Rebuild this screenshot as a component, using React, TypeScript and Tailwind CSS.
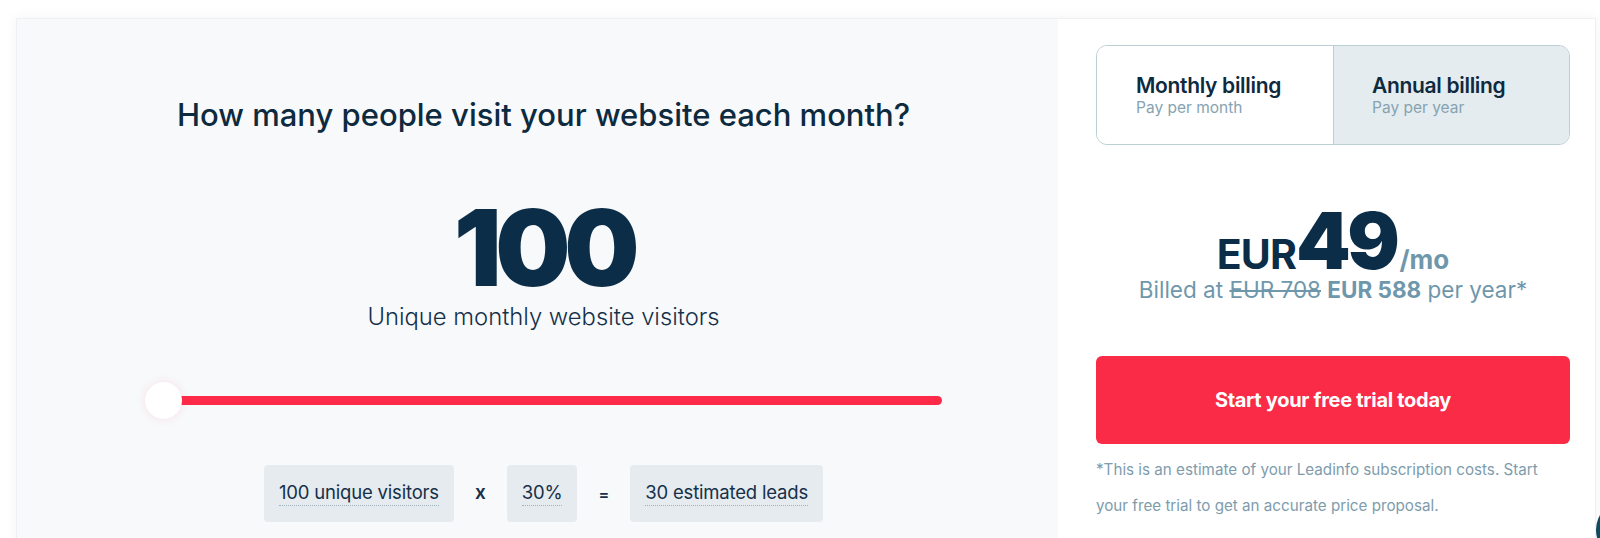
import React from "react";

const FONT = { fontFamily: "Inter, 'Noto Sans', sans-serif" };

function FormulaBox({ children }: { children: React.ReactNode }) {
  return (
    <div className="flex h-[57px] items-center rounded-[4px] bg-[#e5ebee] px-[15px]">
      <span className="border-b border-dotted border-[#9db0bb] pb-[2px] text-[18.5px] leading-[22px] tracking-[-0.01em] text-[#15304a]">
        {children}
      </span>
    </div>
  );
}

function VisitorSlider() {
  return (
    <div className="relative flex h-[38px] w-[797px] items-center">
      <div className="ml-[19px] h-[9px] flex-1 rounded-full bg-[#fd2a48]" />
      <div className="absolute left-0 top-[1px] h-[37px] w-[37px] rounded-full bg-white shadow-[0_0_10px_rgba(253,42,72,0.12)]" />
    </div>
  );
}

function BillingToggle() {
  return (
    <div className="flex h-[100px] overflow-hidden rounded-[11px] border border-[#bccfd5]">
      <button type="button" className="flex flex-1 flex-col items-start justify-center bg-white pl-[39px] text-left">
        <span className="text-[21px] font-semibold leading-[25px] tracking-[-0.015em] text-[#0e2a3f]">
          Monthly billing
        </span>
        <span className="text-[15.5px] leading-[20px] text-[#86a3b1]">Pay per month</span>
      </button>
      <button type="button" className="flex flex-1 flex-col items-start justify-center border-l border-[#bccfd5] bg-[#e4ecf0] pl-[38px] text-left">
        <span className="text-[21px] font-semibold leading-[25px] tracking-[-0.015em] text-[#0e2a3f]">
          Annual billing
        </span>
        <span className="text-[15.5px] leading-[20px] text-[#86a3b1]">Pay per year</span>
      </button>
    </div>
  );
}

export default function App() {
  return (
    <div className="relative h-[538px] overflow-hidden bg-white pl-[16px] pr-[4px] pt-[18px]" style={FONT}>
      <div className="flex h-[560px] border border-[#eef1f3] shadow-[0_0_12px_rgba(15,40,60,0.05)]">
        {/* calculator */}
        <div className="flex w-[1041px] flex-col items-center bg-[#f7f9fb] pl-[12px] pt-[76px]">
          <h2 className="text-[31px] font-medium leading-[40px] tracking-[0em] text-[#0e2a3f]">
            How many people visit your website each month?
          </h2>
          <div className="mt-[73px] text-[106px] font-black leading-[80px] tracking-[-0.06em] text-[#0b2d47]">
            100
          </div>
          <div className="mt-[14px] text-[23.8px] font-light leading-[30px] text-[#15304a]">
            Unique monthly website visitors
          </div>
          <div className="mt-[49px]">
            <VisitorSlider />
          </div>
          <div className="mt-[46px] flex items-center gap-[21px]">
            <FormulaBox>100 unique visitors</FormulaBox>
            <span className="text-[19px] font-semibold text-[#15304a]">x</span>
            <FormulaBox>30%</FormulaBox>
            <span className="text-[16px] font-semibold text-[#15304a]">=</span>
            <FormulaBox>30 estimated leads</FormulaBox>
          </div>
        </div>

        {/* pricing */}
        <div className="flex flex-1 flex-col bg-white pl-[38px] pr-[25px] pt-[26px]">
          <BillingToggle />
          <div className="mt-[68px] flex items-baseline justify-center">
            <span className="text-[41px] font-bold leading-none tracking-[-0.02em] text-[#0b2d47]">EUR</span>
            <span className="text-[78px] font-black leading-[56px] tracking-[-0.045em] text-[#0b2d47]">49</span>
            <span className="ml-[3px] text-[26px] font-bold leading-none text-[#6f97ab]">/mo</span>
          </div>
          <div className="text-center text-[22.5px] leading-[30px] text-[#6f97ab]">
            Billed at <span className="line-through">EUR 708</span>{" "}
            <span className="font-bold">EUR 588</span> per year*
          </div>
          <button
            type="button"
            className="mt-[51px] flex h-[88px] items-center justify-center rounded-[6px] bg-[#f92b47] text-[20px] font-bold tracking-[-0.015em] text-white"
          >
            Start your free trial today
          </button>
          <p className="mt-[8px] text-[15.2px] leading-[36px] text-[#7e9cad]">
            *This is an estimate of your Leadinfo subscription costs. Start your free trial to get an accurate price
            proposal.
          </p>
        </div>
      </div>

      {/* chat launcher peeking in */}
      <div className="absolute bottom-[-22px] right-[-56px] h-[60px] w-[60px] rounded-full bg-[#0f4a5f]" />
    </div>
  );
}
